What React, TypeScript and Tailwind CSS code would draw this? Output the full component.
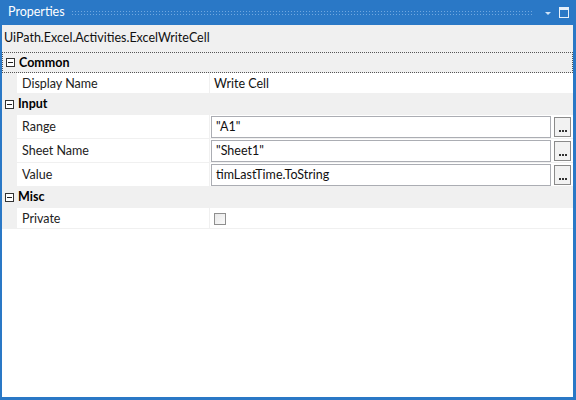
import React from "react";

const font = { fontFamily: 'Lato, "Noto Sans", sans-serif' };

function Minus() {
  return (
    <div className="w-[9px] h-[9px] border border-[#333] bg-white flex items-center justify-center">
      <div className="w-[5px] h-[1px] bg-[#222]" />
    </div>
  );
}

function Category({ name, focused }: { name: string; focused?: boolean }) {
  return (
    <div
      className={
        "h-[21px] flex items-center bg-[#f0f0f0] " +
        (focused ? "border border-dotted border-[#555]" : "border-b border-[#f0f0f0]")
      }
    >
      <div className="w-[15px] flex justify-center">
        <Minus />
      </div>
      <span className="font-bold text-[12.5px] text-black pl-[1px] pt-[1px]">{name}</span>
    </div>
  );
}

function Row({ label, children, h = 21 }: { label: string; children: React.ReactNode; h?: number }) {
  return (
    <div className="flex bg-[#f0f0f0]" style={{ height: h }}>
      <div className="w-[15px]" />
      <div className="flex flex-1 bg-white border-b border-[#f0f0f0]">
        <div className="w-[193px] border-r border-[#f0f0f0] flex items-center pl-[5px] pt-[2px] text-[12.5px] text-[#222]">
          {label}
        </div>
        <div className="flex-1 flex items-center">{children}</div>
      </div>
    </div>
  );
}

function TextRow({ label, value }: { label: string; value: string }) {
  return (
    <Row label={label} h={24}>
      <div className="flex-1 h-[22px] flex items-center gap-[3px] pl-[1px] pr-[2px]">
        <div className="flex-1 h-[22px] border border-[#abadb3] bg-white flex items-center pl-[4px] pt-[1px] text-[12.5px] text-[#111]">
          {value}
        </div>
        <div className="w-[17px] h-[20px] border border-[#8a8a8a] bg-[#f2f2f2] flex items-end justify-center pb-[4px]">
          <div className="flex gap-[1px]">
            <div className="w-[2px] h-[2px] bg-[#333]" />
            <div className="w-[2px] h-[2px] bg-[#333]" />
            <div className="w-[2px] h-[2px] bg-[#333]" />
          </div>
        </div>
      </div>
    </Row>
  );
}

export default function App() {
  return (
    <div className="w-[576px] h-[400px] bg-[#2a78c6] flex flex-col pl-[2px] pr-[3px] pb-[3px]" style={font}>
      <div className="h-[25px] flex items-center pl-[6px] pr-[4px] gap-[6px]">
        <span className="text-white text-[12.5px]">Properties</span>
        <div
          className="flex-1 h-[5px]"
          style={{
            backgroundImage: "radial-gradient(circle, #6fa7e0 0.8px, transparent 1px)",
            backgroundSize: "3px 3px",
          }}
        />
        <svg width="10" height="8" viewBox="0 0 10 8" className="ml-[4px]">
          <path d="M2 3 L8 3 L5 6 Z" fill="#cfe3f7" />
        </svg>
        <svg width="10" height="11" viewBox="0 0 10 11">
          <rect x="0.5" y="0.5" width="9" height="10" fill="none" stroke="#e6f0fa" />
          <rect x="1" y="1" width="8" height="2" fill="#e6f0fa" />
        </svg>
      </div>
      <div className="flex-1 bg-white flex flex-col">
        <div className="h-[27px] bg-[#f0f0f0] flex items-center pl-[2px] text-[12.5px] text-[#111]">
          UiPath.Excel.Activities.ExcelWriteCell
        </div>
        <Category name="Common" focused />
        <Row label="Display Name">
          <span className="pl-[4px] pt-[2px] text-[12.5px] text-[#111]">Write Cell</span>
        </Row>
        <Category name="Input" />
        <TextRow label="Range" value={'"A1"'} />
        <TextRow label="Sheet Name" value={'"Sheet1"'} />
        <TextRow label="Value" value="timLastTime.ToString" />
        <Category name="Misc" />
        <Row label="Private">
          <div className="ml-[4px] mt-[2px] w-[12px] h-[12px] border border-[#8f8f8f] bg-gradient-to-br from-[#e8e8e8] to-[#fafafa]" />
        </Row>
        <div className="flex-1 bg-white" />
      </div>
    </div>
  );
}
